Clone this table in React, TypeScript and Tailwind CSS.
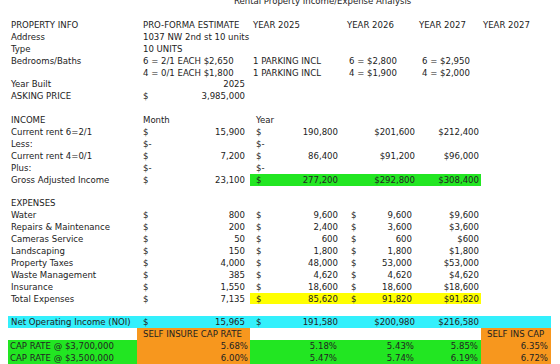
import React from "react";

const Row = ({ children }: { children?: React.ReactNode }) => (
  <div className="grid h-[11.9px] grid-cols-[129px_113px_94px_72px_65px_70px] leading-[11.9px]">{children}</div>
);
const X = ({ c = "", children }: { c?: string; children?: React.ReactNode }) => (
  <div className={"whitespace-nowrap " + c}>{children}</div>
);
const Acc = ({ c = "", v }: { c?: string; v: string }) => (
  <div className={"flex justify-between whitespace-nowrap " + c}>
    <span>$</span>
    <span>{v}</span>
  </div>
);

const G = "bg-[#22e622]";
const Y = "bg-[#ffff00]";
const CY = "bg-[#33f0fc]";
const O = "bg-[#f7971e]";

export default function App() {
  return (
    <div className="h-[364px] w-[560px] overflow-hidden bg-white font-['DejaVu_Sans_Condensed','DejaVu_Sans',sans-serif] text-[9.5px] text-[#222] [font-stretch:condensed]">
      <div className="-mt-[4.75px] pl-[8px]">
        <div className="h-[11.9px] whitespace-nowrap pl-[226px] leading-[11.9px]">Rental Property Income/Expense Analysis</div>
        <Row />
        <Row>
          <X c="pl-[3px]">PROPERTY INFO</X>
          <X c="pl-[6px]">PRO-FORMA ESTIMATE</X>
          <X c="pl-[3px]">YEAR 2025</X>
          <X c="pl-[3px]">YEAR 2026</X>
          <X c="pl-[3px]">YEAR 2027</X>
          <X c="pl-[2px]">YEAR 2027</X>
        </Row>
        <Row>
          <X c="pl-[3px]">Address</X>
          <X c="pl-[6px]">1037 NW 2nd st 10 units</X>
        </Row>
        <Row>
          <X c="pl-[3px]">Type</X>
          <X c="pl-[6px]">10 UNITS</X>
        </Row>
        <Row>
          <X c="pl-[3px]">Bedrooms/Baths</X>
          <X c="pl-[6px]">6 = 2/1 EACH $2,650</X>
          <X c="pl-[3px]">1 PARKING INCL</X>
          <X c="pl-[5px]">6 = $2,800</X>
          <X c="pl-[6px]">6 = $2,950</X>
        </Row>
        <Row>
          <X />
          <X c="pl-[6px]">4 = 0/1 EACH $1,800</X>
          <X c="pl-[3px]">1 PARKING INCL</X>
          <X c="pl-[5px]">4 = $1,900</X>
          <X c="pl-[6px]">4 = $2,000</X>
        </Row>
        <Row>
          <X c="pl-[3px]">Year Built</X>
          <X c="pr-[5px] text-right">2025</X>
        </Row>
        <Row>
          <X c="pl-[3px]">ASKING PRICE</X>
          <Acc c="pl-[6px] pr-[5px]" v="3,985,000" />
        </Row>
        <Row />
        <Row>
          <X c="pl-[3px]">INCOME</X>
          <X c="pl-[6px]">Month</X>
          <X c="pl-[6px]">Year</X>
        </Row>
        <Row>
          <X c="pl-[3px]">Current rent 6=2/1</X>
          <Acc c="pl-[6px] pr-[5px]" v="15,900" />
          <Acc c="pl-[6px] pr-[6px]" v="190,800" />
          <X c="pr-[1px] text-right">$201,600</X>
          <X c="pr-[2px] text-right">$212,400</X>
        </Row>
        <Row>
          <X c="pl-[3px]">Less:</X>
          <X c="pl-[6px]">$-</X>
          <X c="pl-[6px]">$-</X>
        </Row>
        <Row>
          <X c="pl-[3px]">Current rent 4=0/1</X>
          <Acc c="pl-[6px] pr-[5px]" v="7,200" />
          <Acc c="pl-[6px] pr-[6px]" v="86,400" />
          <X c="pr-[1px] text-right">$91,200</X>
          <X c="pr-[2px] text-right">$96,000</X>
        </Row>
        <Row>
          <X c="pl-[3px]">Plus:</X>
          <X c="pl-[6px]">$-</X>
          <X c="pl-[6px]">$-</X>
        </Row>
        <Row>
          <X c="pl-[3px]">Gross Adjusted Income</X>
          <Acc c="pl-[6px] pr-[5px]" v="23,100" />
          <Acc c={"pl-[6px] pr-[6px] " + G} v="277,200" />
          <X c={"pr-[1px] text-right " + G}>$292,800</X>
          <X c={"pr-[2px] text-right " + G}>$308,400</X>
        </Row>
        <Row />
        <Row>
          <X c="pl-[3px]">EXPENSES</X>
        </Row>
        {[
          ["Water", "800", "9,600", "9,600", "$9,600"],
          ["Repairs & Maintenance", "200", "2,400", "3,600", "$3,600"],
          ["Cameras Service", "50", "600", "600", "$600"],
          ["Landscaping", "150", "1,800", "1,800", "$1,800"],
          ["Property Taxes", "4,000", "48,000", "53,000", "$53,000"],
          ["Waste Management", "385", "4,620", "4,620", "$4,620"],
          ["Insurance", "1,550", "18,600", "18,600", "$18,600"],
        ].map((r) => (
          <Row key={r[0]}>
            <X c="pl-[3px]">{r[0]}</X>
            <Acc c="pl-[6px] pr-[5px]" v={r[1]} />
            <Acc c="pl-[6px] pr-[6px]" v={r[2]} />
            <Acc c="pl-[7px] pr-[4px]" v={r[3]} />
            <X c="pr-[2px] text-right">{r[4]}</X>
          </Row>
        ))}
        <Row>
          <X c="pl-[3px]">Total Expenses</X>
          <Acc c="pl-[6px] pr-[5px]" v="7,135" />
          <Acc c={"pl-[6px] pr-[6px] " + Y} v="85,620" />
          <Acc c={"pl-[7px] pr-[4px] " + Y} v="91,820" />
          <X c={"pr-[2px] text-right " + Y}>$91,820</X>
        </Row>
        <Row />
        <Row>
          <X c={"pl-[3px] " + CY}>Net Operating Income (NOI)</X>
          <Acc c={"pl-[6px] pr-[5px] " + CY} v="15,965" />
          <Acc c={"pl-[6px] pr-[6px] " + CY} v="191,580" />
          <X c={"pr-[1px] text-right " + CY}>$200,980</X>
          <X c={"pr-[2px] text-right " + CY}>$216,580</X>
          <X c={CY} />
        </Row>
        <Row>
          <X />
          <X c={"pl-[6px] " + O}>SELF INSURE CAP RATE</X>
          <X />
          <X />
          <X />
          <X c={"pl-[6px] " + O}>SELF INS CAP</X>
        </Row>
        <Row>
          <X c={"pl-[2px] " + G}>CAP RATE @ $3,700,000</X>
          <X c={"pr-[2px] text-right " + O}>5.68%</X>
          <X c={"pr-[7px] text-right " + G}>5.18%</X>
          <X c={"pr-[2px] text-right " + G}>5.43%</X>
          <X c={"pr-[3px] text-right " + G}>5.85%</X>
          <X c={"pr-[3px] text-right " + O}>6.35%</X>
        </Row>
        <Row>
          <X c={"pl-[2px] " + G}>CAP RATE @ $3,500,000</X>
          <X c={"pr-[2px] text-right " + O}>6.00%</X>
          <X c={"pr-[7px] text-right " + G}>5.47%</X>
          <X c={"pr-[2px] text-right " + G}>5.74%</X>
          <X c={"pr-[3px] text-right " + G}>6.19%</X>
          <X c={"pr-[3px] text-right " + O}>6.72%</X>
        </Row>
      </div>
    </div>
  );
}
